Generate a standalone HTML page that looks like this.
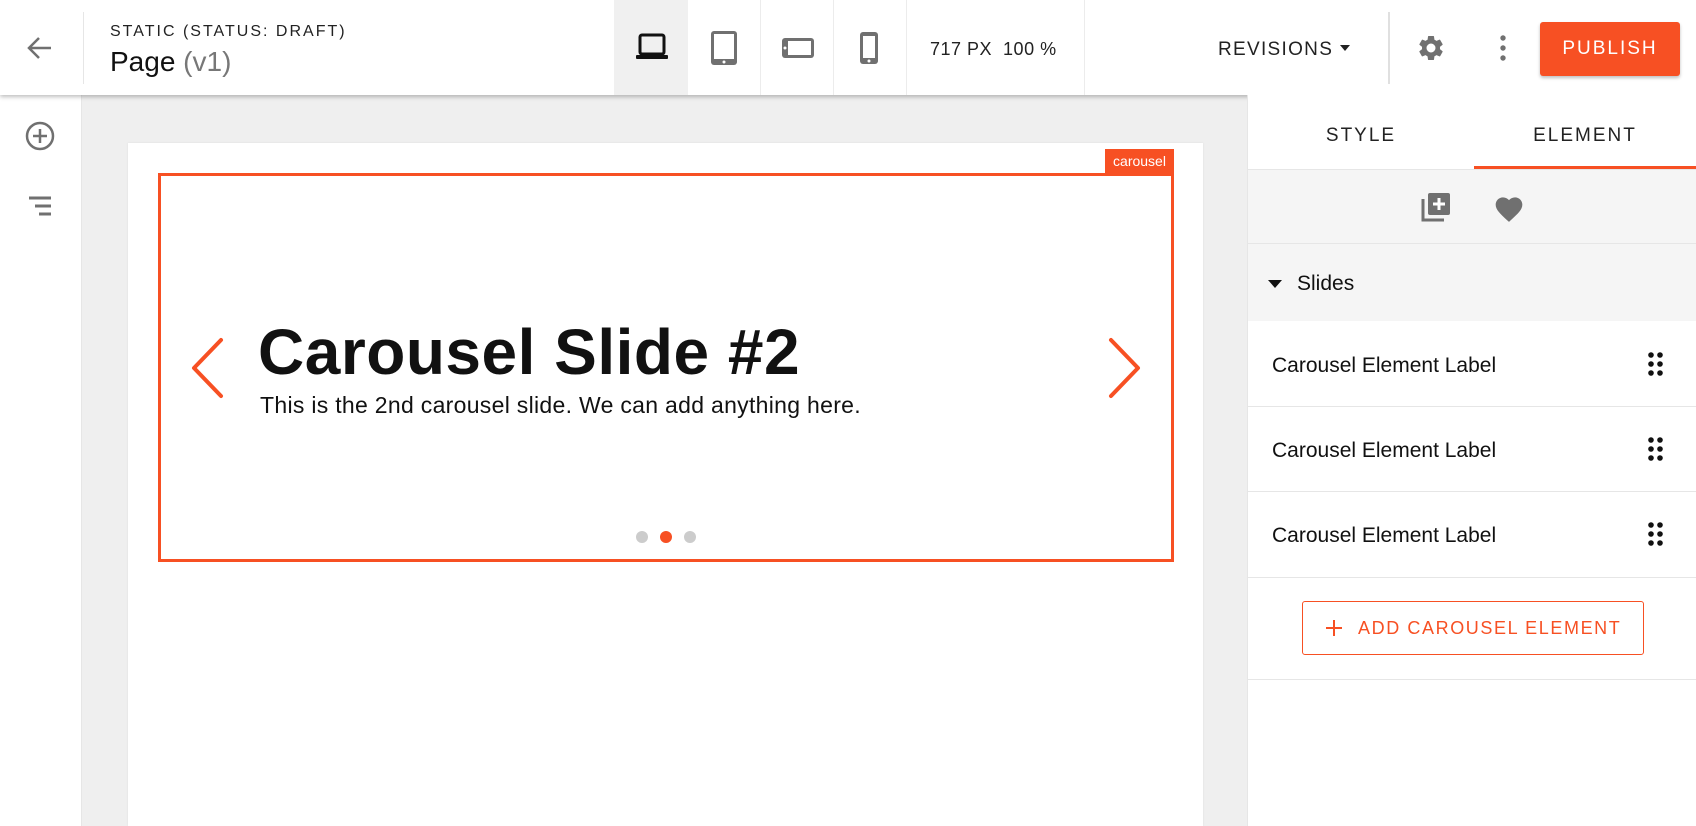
<!DOCTYPE html>
<html><head><meta charset="utf-8"><style>
*{margin:0;padding:0;box-sizing:border-box}
body{width:1696px;height:826px;overflow:hidden;background:#fff;font-family:"Liberation Sans",sans-serif;position:relative;color:#111}
.a{position:absolute}
</style></head><body>
<div class="a" style="left:82px;top:95px;width:1165px;height:731px;background:#efefef"></div>
<div class="a" style="left:128px;top:143px;width:1075px;height:683px;background:#fff;box-shadow:0 0 2px rgba(0,0,0,.08)"></div>
<div class="a" style="left:158px;top:173px;width:1016px;height:389px;border:3px solid #f75023"></div>
<div class="a" style="left:1105px;top:149px;width:69px;height:25px;background:#f75023;color:#fff;font-size:14px;line-height:25px;text-align:center">carousel</div>
<svg class="a" style="left:188px;top:336px" width="40" height="64"><path d="M33 4 L6 32 L33 60" fill="none" stroke="#f75023" stroke-width="4" stroke-linecap="round" stroke-linejoin="round"/></svg>
<svg class="a" style="left:1104px;top:336px" width="40" height="64"><path d="M7 4 L34 32 L7 60" fill="none" stroke="#f75023" stroke-width="4" stroke-linecap="round" stroke-linejoin="round"/></svg>
<div class="a" style="left:258px;top:312px;font-size:64px;font-weight:bold;letter-spacing:0.5px;line-height:80px;white-space:nowrap">Carousel Slide #2</div>
<div class="a" style="left:260px;top:391px;font-size:23px;line-height:28px;white-space:nowrap;letter-spacing:0.3px">This is the 2nd carousel slide. We can add anything here.</div>
<div class="a" style="left:636px;top:531px;width:12px;height:12px;border-radius:50%;background:#ccc"></div>
<div class="a" style="left:660px;top:531px;width:12px;height:12px;border-radius:50%;background:#f75023"></div>
<div class="a" style="left:684px;top:531px;width:12px;height:12px;border-radius:50%;background:#ccc"></div>
<div class="a" style="left:0;top:95px;width:82px;height:731px;background:#fff;border-right:1px solid #e6e6e6"></div>
<svg class="a" style="left:25px;top:121px" width="30" height="30"><circle cx="15" cy="15" r="13" fill="none" stroke="#707070" stroke-width="2.5"/><path d="M15 8v14M8 15h14" stroke="#707070" stroke-width="2.5"/></svg>
<svg class="a" style="left:27px;top:196px" width="28" height="22"><path d="M2 2h22M8 10h16M12 18h12" stroke="#707070" stroke-width="3"/></svg>
<div class="a" style="left:0;top:0;width:1696px;height:95px;background:#fff;box-shadow:0 2px 4px rgba(0,0,0,.25)"></div>
<svg class="a" style="left:25px;top:35px" width="28" height="26"><path d="M26 13H4M14 3L4 13l10 10" fill="none" stroke="#707070" stroke-width="2.5"/></svg>
<div class="a" style="left:83px;top:12px;width:1px;height:72px;background:#e6e6e6"></div>
<div class="a" style="left:110px;top:23px;font-size:16px;letter-spacing:2px;color:#222">STATIC (STATUS: DRAFT)</div>
<div class="a" style="left:110px;top:46px;font-size:28px;color:#111">Page <span style="color:#777">(v1)</span></div>
<div class="a" style="left:614px;top:0;width:74px;height:95px;background:#f0f0f0"></div>
<div class="a" style="left:760px;top:0;width:1px;height:95px;background:#ececec"></div>
<div class="a" style="left:833px;top:0;width:1px;height:95px;background:#ececec"></div>
<div class="a" style="left:906px;top:0;width:1px;height:95px;background:#ececec"></div>
<div class="a" style="left:1084px;top:0;width:1px;height:95px;background:#ececec"></div>
<svg class="a" style="left:635px;top:33px" width="34" height="28"><rect x="5" y="2" width="24" height="19" rx="2" fill="none" stroke="#111" stroke-width="3"/><rect x="1" y="22" width="32" height="4" rx="1" fill="#111"/></svg>
<svg class="a" style="left:709px;top:29px" width="30" height="38"><rect x="2" y="2" width="26" height="34" rx="3" fill="#707070"/><rect x="5" y="5" width="20" height="25" fill="#fff"/><circle cx="15" cy="33" r="1.5" fill="#fff"/></svg>
<svg class="a" style="left:780px;top:36px" width="36" height="24"><rect x="2" y="2" width="32" height="20" rx="3" fill="#707070"/><rect x="8" y="5" width="23" height="14" fill="#fff"/><circle cx="5" cy="12" r="1.5" fill="#fff"/></svg>
<svg class="a" style="left:858px;top:30px" width="22" height="36"><rect x="2" y="2" width="18" height="32" rx="3" fill="#707070"/><rect x="5" y="6" width="12" height="22" fill="#fff"/><circle cx="11" cy="31" r="1.5" fill="#fff"/></svg>
<div class="a" style="left:930px;top:39px;font-size:18px;color:#222;letter-spacing:.5px;white-space:nowrap">717 PX &nbsp;100 %</div>
<div class="a" style="left:1218px;top:39px;font-size:19px;letter-spacing:1.3px;color:#222">REVISIONS</div>
<svg class="a" style="left:1340px;top:45px" width="10" height="6"><path d="M0 0h10L5 6z" fill="#222"/></svg>
<div class="a" style="left:1388px;top:12px;width:2px;height:72px;background:#e0e0e0"></div>
<svg class="a" style="left:1416px;top:32px" width="30" height="32" viewBox="0 0 24 24"><path fill="#707070" d="M19.14 12.94c.04-.3.06-.61.06-.94s-.02-.64-.07-.94l2.03-1.58a.49.49 0 0 0 .12-.61l-1.92-3.32a.49.49 0 0 0-.59-.22l-2.39.96c-.5-.38-1.03-.7-1.62-.94l-.36-2.54a.48.48 0 0 0-.48-.41h-3.84c-.24 0-.43.17-.47.41l-.36 2.54c-.59.24-1.13.57-1.62.94l-2.39-.96a.49.49 0 0 0-.59.22L2.74 8.87c-.12.21-.08.47.12.61l2.03 1.58c-.05.3-.09.63-.09.94s.02.64.07.94l-2.03 1.58a.49.49 0 0 0-.12.61l1.92 3.32c.12.22.37.29.59.22l2.39-.96c.5.38 1.03.7 1.62.94l.36 2.54c.05.24.24.41.48.41h3.84c.24 0 .44-.17.47-.41l.36-2.54c.59-.24 1.13-.56 1.62-.94l2.39.96c.22.08.47 0 .59-.22l1.92-3.32c.12-.22.07-.47-.12-.61l-2.01-1.58zM12 15.6A3.6 3.6 0 1 1 12 8.4a3.6 3.6 0 0 1 0 7.2z"/></svg>
<svg class="a" style="left:1498px;top:34px" width="10" height="28"><circle cx="5" cy="4" r="2.7" fill="#707070"/><circle cx="5" cy="14" r="2.7" fill="#707070"/><circle cx="5" cy="24" r="2.7" fill="#707070"/></svg>
<div class="a" style="left:1540px;top:22px;width:140px;height:54px;background:#f75023;border-radius:3px;box-shadow:0 2px 3px rgba(0,0,0,.25);color:#fff;font-size:19px;letter-spacing:2px;text-align:center;line-height:54px">PUBLISH</div>
<div class="a" style="left:1247px;top:95px;width:449px;height:731px;background:#fff;border-left:1px solid #e6e6e6"></div>
<div class="a" style="left:1248px;top:125px;width:226px;text-align:center;font-size:19px;letter-spacing:2px;color:#222">STYLE</div>
<div class="a" style="left:1474px;top:125px;width:222px;text-align:center;font-size:19px;letter-spacing:2px;color:#222">ELEMENT</div>
<div class="a" style="left:1474px;top:166px;width:222px;height:3px;background:#f75023"></div>
<div class="a" style="left:1248px;top:169px;width:448px;height:75px;background:#f5f5f5;border-top:1px solid #e6e6e6;border-bottom:1px solid #e6e6e6"></div>
<svg class="a" style="left:1420px;top:191px" width="32" height="32"><path d="M3 8v21h21" fill="none" stroke="#707070" stroke-width="3"/><rect x="8" y="2" width="22" height="22" rx="2" fill="#707070"/><path d="M19 7v12M13 13h12" stroke="#fff" stroke-width="3"/></svg>
<svg class="a" style="left:1493px;top:193px" width="32" height="30" viewBox="0 0 24 22"><path fill="#707070" d="M12 21.4l-1.5-1.3C5.4 15.4 2 12.3 2 8.5 2 5.4 4.4 3 7.5 3c1.7 0 3.4.8 4.5 2.1C13.1 3.8 14.8 3 16.5 3 19.6 3 22 5.4 22 8.5c0 3.8-3.4 6.9-8.5 11.5L12 21.4z"/></svg>
<div class="a" style="left:1248px;top:244px;width:448px;height:77px;background:#f5f5f5"></div>
<svg class="a" style="left:1268px;top:280px" width="14" height="8"><path d="M0 0h14L7 8z" fill="#111"/></svg>
<div class="a" style="left:1297px;top:272px;font-size:21px;color:#111">Slides</div>
<div class="a" style="left:1248px;top:321px;width:448px;height:86px;border-bottom:1px solid #e6e6e6"></div>
<div class="a" style="left:1248px;top:407px;width:448px;height:85px;border-bottom:1px solid #e6e6e6"></div>
<div class="a" style="left:1248px;top:492px;width:448px;height:86px;border-bottom:1px solid #e6e6e6"></div>
<div class="a" style="left:1272px;top:354px;font-size:21px">Carousel Element Label</div>
<div class="a" style="left:1272px;top:439px;font-size:21px">Carousel Element Label</div>
<div class="a" style="left:1272px;top:524px;font-size:21px">Carousel Element Label</div>
<svg class="a" style="left:1647px;top:351px" width="18" height="26"><g fill="#111"><circle cx="4" cy="4" r="2.8"/><circle cx="13" cy="4" r="2.8"/><circle cx="4" cy="13" r="2.8"/><circle cx="13" cy="13" r="2.8"/><circle cx="4" cy="22" r="2.8"/><circle cx="13" cy="22" r="2.8"/></g></svg>
<svg class="a" style="left:1647px;top:436px" width="18" height="26"><g fill="#111"><circle cx="4" cy="4" r="2.8"/><circle cx="13" cy="4" r="2.8"/><circle cx="4" cy="13" r="2.8"/><circle cx="13" cy="13" r="2.8"/><circle cx="4" cy="22" r="2.8"/><circle cx="13" cy="22" r="2.8"/></g></svg>
<svg class="a" style="left:1647px;top:521px" width="18" height="26"><g fill="#111"><circle cx="4" cy="4" r="2.8"/><circle cx="13" cy="4" r="2.8"/><circle cx="4" cy="13" r="2.8"/><circle cx="13" cy="13" r="2.8"/><circle cx="4" cy="22" r="2.8"/><circle cx="13" cy="22" r="2.8"/></g></svg>
<div class="a" style="left:1302px;top:601px;width:342px;height:54px;border:1.5px solid #f75023;border-radius:3px"></div>
<svg class="a" style="left:1325px;top:619px" width="18" height="18"><path d="M9 1v16M1 9h16" stroke="#f75023" stroke-width="2"/></svg>
<div class="a" style="left:1358px;top:618px;font-size:18px;letter-spacing:1.6px;color:#f75023;white-space:nowrap">ADD CAROUSEL ELEMENT</div>
<div class="a" style="left:1248px;top:679px;width:448px;height:1px;background:#e6e6e6"></div>
</body></html>
